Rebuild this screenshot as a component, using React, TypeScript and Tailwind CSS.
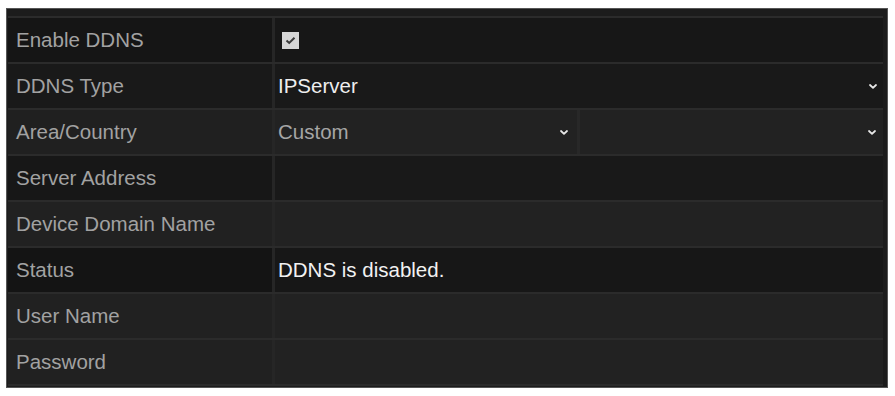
import React from 'react'

type Row = {
  label: string
  labelBg: string
  valueBg: string
  kind: 'check' | 'select' | 'area' | 'text' | 'empty'
  value?: string
}

const rows: Row[] = [
  { label: 'Enable DDNS', labelBg: 'bg-[#151515]', valueBg: 'bg-[#171717]', kind: 'check' },
  { label: 'DDNS Type', labelBg: 'bg-[#191919]', valueBg: 'bg-[#191919]', kind: 'select', value: 'IPServer' },
  { label: 'Area/Country', labelBg: 'bg-[#202020]', valueBg: 'bg-[#222222]', kind: 'area', value: 'Custom' },
  { label: 'Server Address', labelBg: 'bg-[#171717]', valueBg: 'bg-[#191919]', kind: 'empty' },
  { label: 'Device Domain Name', labelBg: 'bg-[#212121]', valueBg: 'bg-[#222222]', kind: 'empty' },
  { label: 'Status', labelBg: 'bg-[#141414]', valueBg: 'bg-[#171717]', kind: 'text', value: 'DDNS is disabled.' },
  { label: 'User Name', labelBg: 'bg-[#212121]', valueBg: 'bg-[#222222]', kind: 'empty' },
  { label: 'Password', labelBg: 'bg-[#212121]', valueBg: 'bg-[#222222]', kind: 'empty' }
]

const Caret: React.FC = () => (
  <svg width="8" height="5" viewBox="0 0 8 5" className="shrink-0">
    <path d="M1 1 L4 3.8 L7 1" fill="none" stroke="#e8e8e8" strokeWidth="1.8" strokeLinecap="round" strokeLinejoin="round" />
  </svg>
)

const Checkbox: React.FC = () => (
  <div className="ml-[4px] flex h-[17px] w-[17px] items-center justify-center bg-[#d6d6d6]">
    <svg width="11" height="9" viewBox="0 0 11 9">
      <path d="M1.5 4.6 L4.2 7 L9.5 1.8" fill="none" stroke="#3a3a3a" strokeWidth="2" />
    </svg>
  </div>
)

const Value: React.FC<{ row: Row }> = ({ row }) => {
  if (row.kind === 'check') return <Checkbox />
  if (row.kind === 'select')
    return (
      <div className="flex flex-1 items-center justify-between pr-[6px]">
        <span className="text-[#eeeeee]">{row.value}</span>
        <Caret />
      </div>
    )
  if (row.kind === 'area')
    return (
      <div className="flex h-full flex-1 items-stretch">
        <div className="flex w-[302px] items-center justify-between border-r-[3px] border-[#282828] pr-[9px]">
          <span className="text-[#a6a6a6]">{row.value}</span>
          <Caret />
        </div>
        <div className="flex flex-1 items-center justify-end pr-[7px]">
          <Caret />
        </div>
      </div>
    )
  if (row.kind === 'text') return <span className="text-[#f2f2f2]">{row.value}</span>
  return null
}

export default function App() {
  return (
    <div className="h-[396px] w-[895px] bg-white pl-[6px] pt-[8px]" style={{ fontFamily: '"Liberation Sans", Arial, sans-serif' }}>
      <div className="h-[380px] w-[882px] border border-[#555555] bg-[#1c1c1c] pb-[1px] pl-[1px] pr-[4px] pt-[7px]">
        <div className="border-b-2 border-[#2b2b2b]">
          {rows.map((r) => (
            <div key={r.label} className="flex h-[46px] border-t-2 border-[#2b2b2b] text-[20.5px] leading-none">
              <div className={`flex w-[267px] shrink-0 items-center border-r-[3px] border-[#262626] pl-[8px] text-[#a2a2a2] ${r.labelBg}`}>
                {r.label}
              </div>
              <div className={`flex flex-1 items-center pl-[3px] ${r.valueBg}`}>
                <Value row={r} />
              </div>
            </div>
          ))}
        </div>
      </div>
    </div>
  )
}
